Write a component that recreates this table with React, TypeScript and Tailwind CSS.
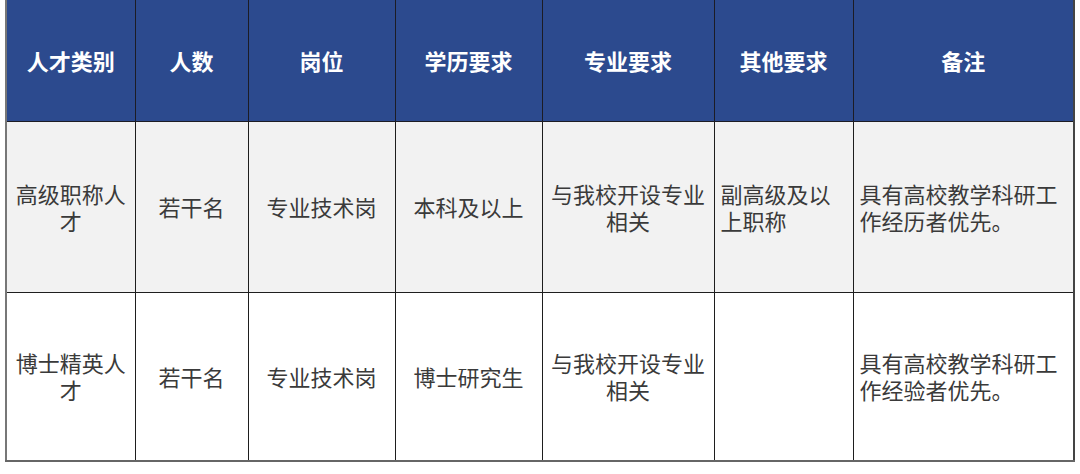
import React from 'react';

const cols = [129, 113, 147, 147, 172, 139, 221];

const headers = ['人才类别', '人数', '岗位', '学历要求', '专业要求', '其他要求', '备注'];

const rows = [
    {
        bg: 'bg-[#f2f2f2]',
        cells: ['高级职称人才', '若干名', '专业技术岗', '本科及以上', '与我校开设专业相关', '副高级及以上职称', '具有高校教学科研工作经历者优先。'],
    },
    {
        bg: 'bg-white',
        cells: ['博士精英人才', '若干名', '专业技术岗', '博士研究生', '与我校开设专业相关', '', '具有高校教学科研工作经验者优先。'],
    },
];

export default function App() {
    return (
        <div
            className="w-[1080px] h-[474px] bg-white pl-[5px] overflow-hidden"
            style={{ fontFamily: '"Noto Sans CJK SC", "Noto Sans", sans-serif' }}
        >
            <table className="table-fixed border-collapse w-[1068px] border-l-2 border-b-2 border-r-2 border-l-[#777] border-b-[#666] border-r-[#444]">
                <colgroup>
                    {cols.map((w, i) => (
                        <col key={i} style={{ width: w }} />
                    ))}
                </colgroup>
                <thead>
                    <tr className="h-[121px] bg-[#2c4a8e]">
                        {headers.map((h, i) => (
                            <th
                                key={i}
                                className="border-x border-b border-[#1c1c24] text-white text-[22px] font-bold text-center align-middle leading-[28px]"
                            >
                                {h}
                            </th>
                        ))}
                    </tr>
                </thead>
                <tbody>
                    {rows.map((r, ri) => (
                        <tr key={ri} className={`${ri === 0 ? 'h-[171px]' : 'h-[169px]'} ${r.bg}`}>
                            {r.cells.map((c, ci) => (
                                <td
                                    key={ci}
                                    className={`border border-[#1e1e1e] text-[22px] leading-[27px] text-[#3a3a3a] align-middle ${
                                        ci >= 5 ? 'text-left pl-[6px] pr-[4px]' : 'text-center px-[4px]'
                                    }`}
                                >
                                    {c}
                                </td>
                            ))}
                        </tr>
                    ))}
                </tbody>
            </table>
        </div>
    );
}
